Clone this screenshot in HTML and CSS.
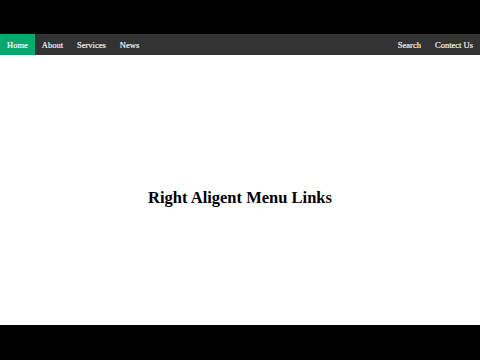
FILE: index.html
```
<!DOCTYPE html>
<html>
<head>
<meta charset="utf-8">
<link rel="stylesheet" href="styles.css">
</head>
<body>
<div class="top-bar"></div>
<nav class="topnav">
  <div class="left">
    <a class="active" href="#">Home</a>
    <a href="#">About</a>
    <a href="#">Services</a>
    <a href="#">News</a>
  </div>
  <div class="right">
    <a href="#">Search</a>
    <a href="#">Contect Us</a>
  </div>
</nav>
<main class="content">
  <h2 class="title">Right Aligent Menu Links</h2>
</main>
<div class="bottom-bar"></div>
</body>
</html>
```
FILE: styles.css
```
html, body {
  margin: 0;
  padding: 0;
  background: #000;
  font-family: "Liberation Serif", "Times New Roman", serif;
}
.top-bar {
  height: 34px;
  background: #000;
}
.topnav {
  height: 21px;
  background: #333;
  display: flex;
  justify-content: space-between;
}
.left, .right {
  display: flex;
}
.topnav a {
  display: flex;
  align-items: center;
  padding: 0 7px;
  color: #f2f2f2;
  text-decoration: none;
  font-size: 8.5px;
  font-weight: 500;
  -webkit-text-stroke: 0.2px #f2f2f2;
}
.topnav a.active {
  background: #04AA6D;
  color: #fff;
}
.content {
  height: 270px;
  background: #fff;
  display: flex;
  align-items: center;
  justify-content: center;
}
.title {
  margin: 16px 0 0 0;
  font-size: 16.5px;
  font-weight: bold;
  color: #000;
}
.bottom-bar {
  height: 35px;
  background: #000;
}
```
